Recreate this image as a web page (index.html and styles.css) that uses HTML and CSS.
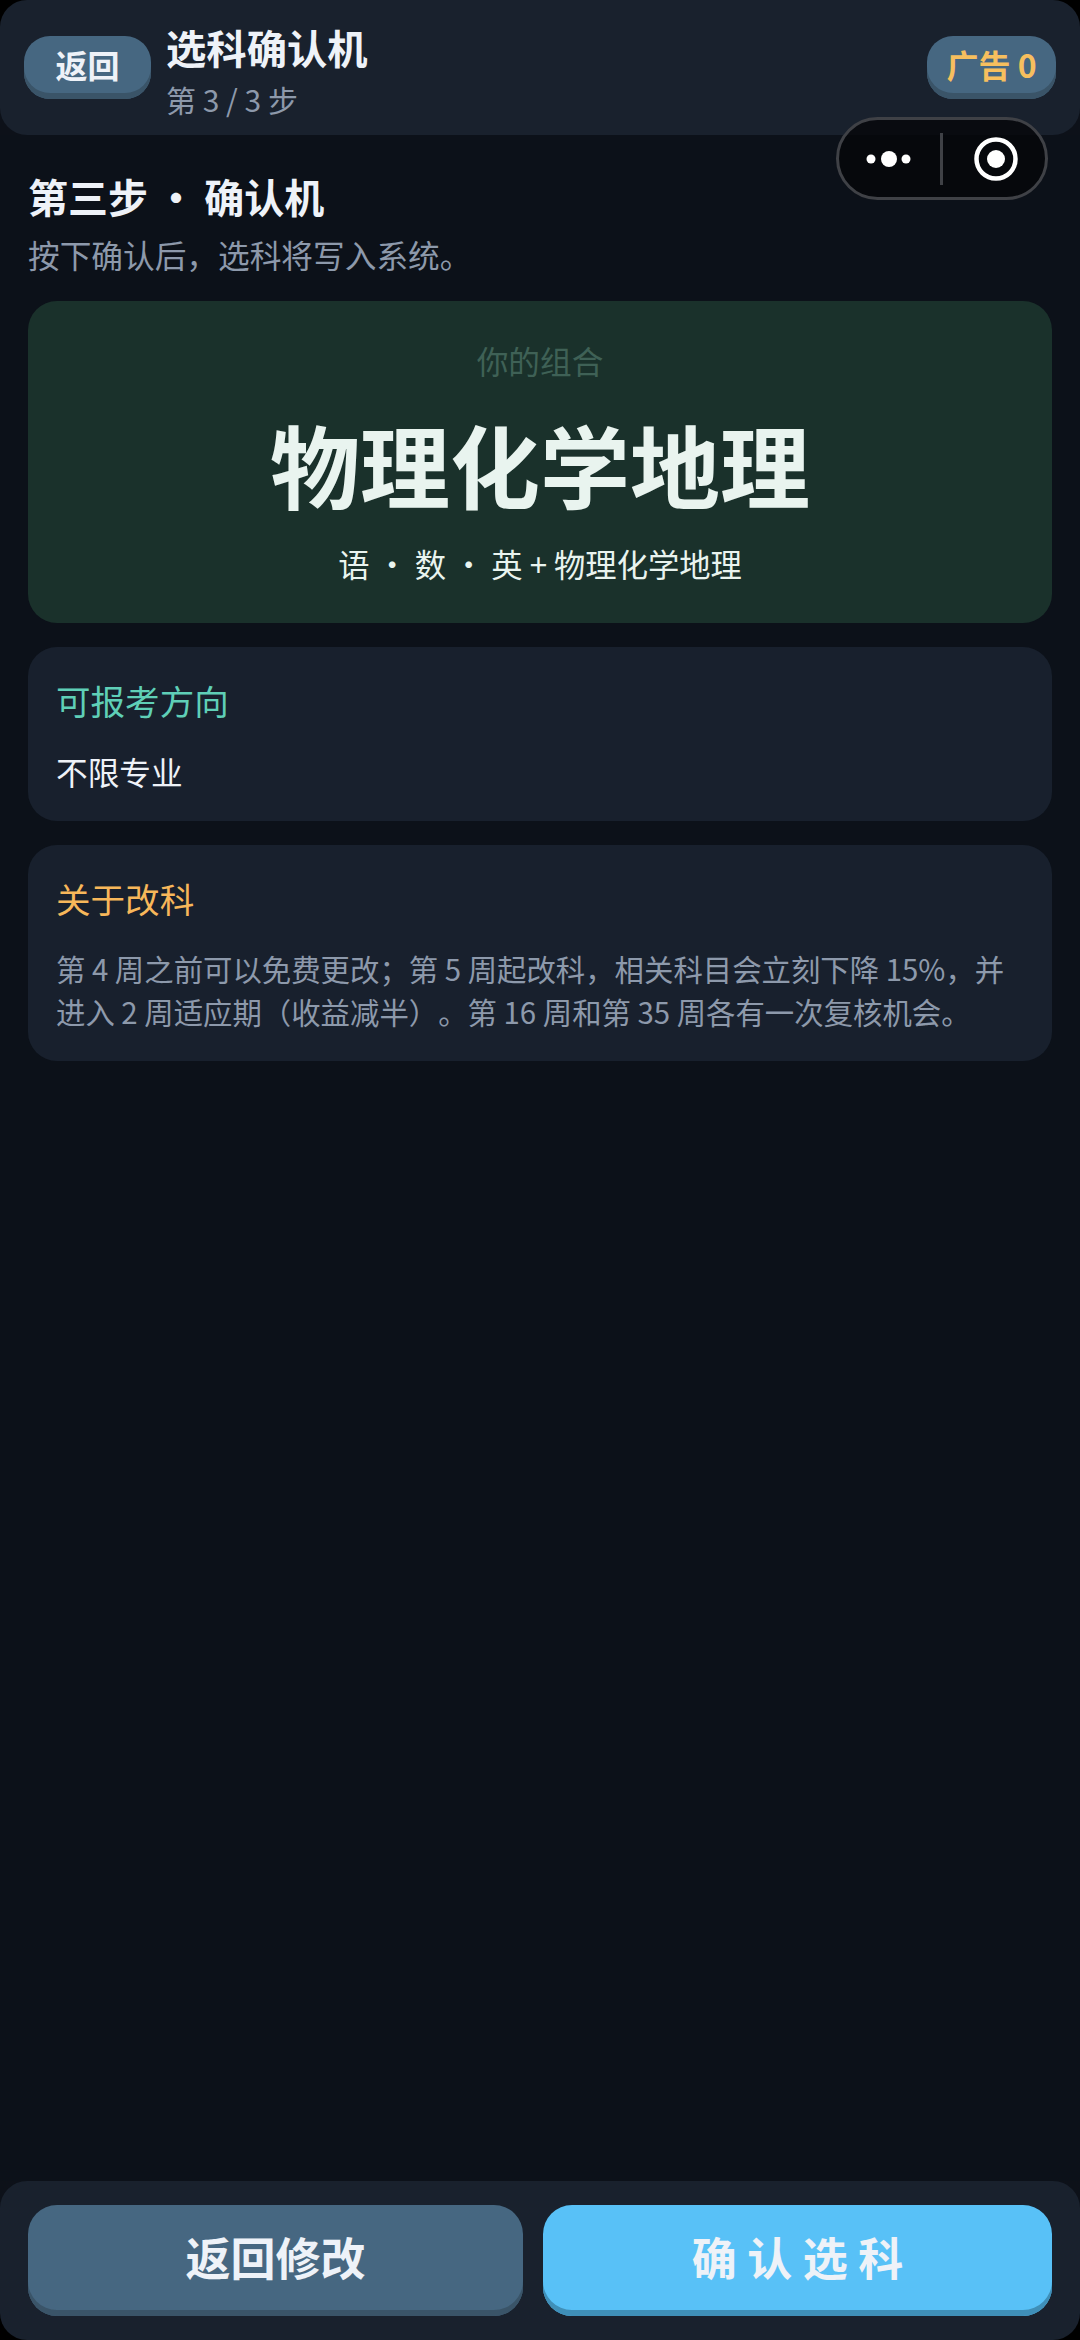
FILE: index.html
```html
<!DOCTYPE html>
<html lang="zh-CN">
<head>
  <meta charset="UTF-8" />
  <meta name="viewport" content="width=device-width, initial-scale=1.0"/>
  <title>选科确认机</title>
  <link rel="stylesheet" href="styles.css">
</head>
<body>
  <div class="top-wrap">
    <header class="top-bar">
      <div class="pill-btn back-btn">返回</div>
      <div class="top-info">
        <div class="top-title">选科确认机</div>
        <div class="top-step">第 3 / 3 步</div>
      </div>
      <div class="pill-btn ad-btn">广告 0</div>
    </header>
  </div>

  <!-- wechat capsule sits over the header -->
  <div class="capsule">
    <svg class="capsule-dots" width="64" height="20" viewBox="0 0 64 20">
      <circle cx="9" cy="10" r="4.5" fill="#fff"/>
      <circle cx="27" cy="10" r="8" fill="#fff"/>
      <circle cx="44" cy="10" r="4.5" fill="#fff"/>
    </svg>
    <div class="capsule-line"></div>
    <svg class="capsule-target" width="46" height="46" viewBox="0 0 46 46">
      <circle cx="23" cy="23" r="19.5" fill="none" stroke="#fff" stroke-width="4.5"/>
      <circle cx="23" cy="23" r="9" fill="#fff"/>
    </svg>
  </div>

  <main class="content">
    <h1 class="step-title">第三步 · 确认机</h1>
    <p class="step-desc">按下确认后，选科将写入系统。</p>

    <section class="hero">
      <div class="hero-label">你的组合</div>
      <div class="hero-name">物理化学地理</div>
      <div class="hero-sub">语 · 数 · 英 + 物理化学地理</div>
    </section>

    <section class="card">
      <div class="card-title teal">可报考方向</div>
      <div class="card-value">不限专业</div>
    </section>

    <section class="card card-note">
      <div class="card-title orange">关于改科</div>
      <div class="card-text">第 4 周之前可以免费更改；第 5 周起改科，相关科目会立刻下降 15%，并进入 2 周适应期（收益减半）。第 16 周和第 35 周各有一次复核机会。</div>
    </section>
  </main>

  <div class="bottom-wrap">
    <footer class="bottom-bar">
      <div class="action-btn action-back">返回修改</div>
      <div class="action-btn action-confirm">确认选科</div>
    </footer>
  </div>
</body>
</html>
```

FILE: styles.css
```css
* {
  box-sizing: border-box;
}

html, body {
  height: 100%;
}

body {
  margin: 0;
  width: 1080px;
  height: 2340px;
  display: flex;
  flex-direction: column;
  position: relative;
  background: #0c1119;
  color: #eef2f8;
  font-family: "Noto Sans CJK SC", "Noto Sans", sans-serif;
  text-spacing-trim: space-all;
}

.top-wrap {
  background: linear-gradient(#000 50%, #0d1119 50%);
}

.top-bar {
  height: 135px;
  padding: 0 24px;
  display: flex;
  gap: 15px;
  background: #19212d;
  border-radius: 27px;
}

.pill-btn {
  margin-top: 36px;
  height: 63px;
  padding-bottom: 8px;
  display: flex;
  align-items: center;
  justify-content: center;
  background: #466781;
  border-radius: 26px;
  box-shadow: inset 0 -6px 0 #3a5468;
  font-size: 32px;
  font-weight: 700;
}

.back-btn {
  width: 127px;
}

.ad-btn {
  width: 129px;
  margin-left: auto;
  color: #f7bf5e;
}

.top-info {
  padding-top: 18px;
}

.top-title {
  font-size: 40.32px;
  font-weight: 700;
  line-height: 57px;
}

.top-step {
  font-size: 30px;
  line-height: 48px;
  color: #8d99ab;
}

.capsule {
  position: absolute;
  top: 117px;
  left: 836px;
  width: 212px;
  height: 83px;
  display: flex;
  align-items: center;
  border: 3.5px solid #3f4146;
  border-radius: 42px;
  background: rgba(5, 6, 9, 0.8);
}

.capsule-dots {
  margin-left: 23px;
}

.capsule-line {
  width: 2.5px;
  height: 52px;
  margin-left: 14px;
  background: #3f4146;
}

.capsule-target {
  margin-left: 30px;
}

.content {
  flex: 1;
  padding: 0 28px;
}

.step-title {
  margin: 32px 0 0;
  font-size: 40px;
  font-weight: 700;
  line-height: 58px;
  word-spacing: -1px;
}

.step-desc {
  margin: 6px 0 0;
  font-size: 31.68px;
  line-height: 46px;
  color: #8d99ab;
}

.hero {
  height: 322px;
  margin-top: 24px;
  padding-top: 36px;
  text-align: center;
  background: #1a312b;
  border-radius: 29px;
}

.hero-label {
  font-size: 31.68px;
  line-height: 46px;
  color: #3f6156;
}

.hero-name {
  margin-top: 18px;
  font-size: 90px;
  font-weight: 700;
  line-height: 124px;
  color: #e9f4ef;
}

.hero-sub {
  margin-top: 16px;
  font-size: 31.3px;
  line-height: 46px;
  color: #e9f4ef;
}

.card {
  height: 174px;
  margin-top: 24px;
  padding: 28px 28px 0;
  background: #18202d;
  border-radius: 29px;
}

.card-note {
  height: 216px;
}

.card-title {
  font-size: 34.56px;
  line-height: 50px;
}

.teal {
  color: #5fcfb7;
}

.orange {
  color: #f7b75a;
}

.card-value {
  margin-top: 23px;
  font-size: 31.68px;
  line-height: 46px;
}

.card-text {
  margin-top: 24px;
  font-size: 29.4px;
  line-height: 43px;
  color: #8d99ab;
}

.bottom-wrap {
  background: linear-gradient(#0d1119 50%, #000 50%);
}

.bottom-bar {
  height: 159px;
  padding: 24px 28px 0;
  display: flex;
  gap: 20px;
  background: #19212d;
  border-radius: 27px;
}

.action-btn {
  height: 111px;
  padding-bottom: 8px;
  display: flex;
  align-items: center;
  justify-content: center;
  border-radius: 29px;
  font-size: 45px;
  font-weight: 700;
}

.action-back {
  flex: 0 0 495px;
  background: #466781;
  box-shadow: inset 0 -6px 0 #3a5468;
}

.action-confirm {
  flex: 1;
  padding-left: 10.5px;
  background: #58c1f7;
  box-shadow: inset 0 -6px 0 #3f8fb8;
  letter-spacing: 10.5px;
}
```
